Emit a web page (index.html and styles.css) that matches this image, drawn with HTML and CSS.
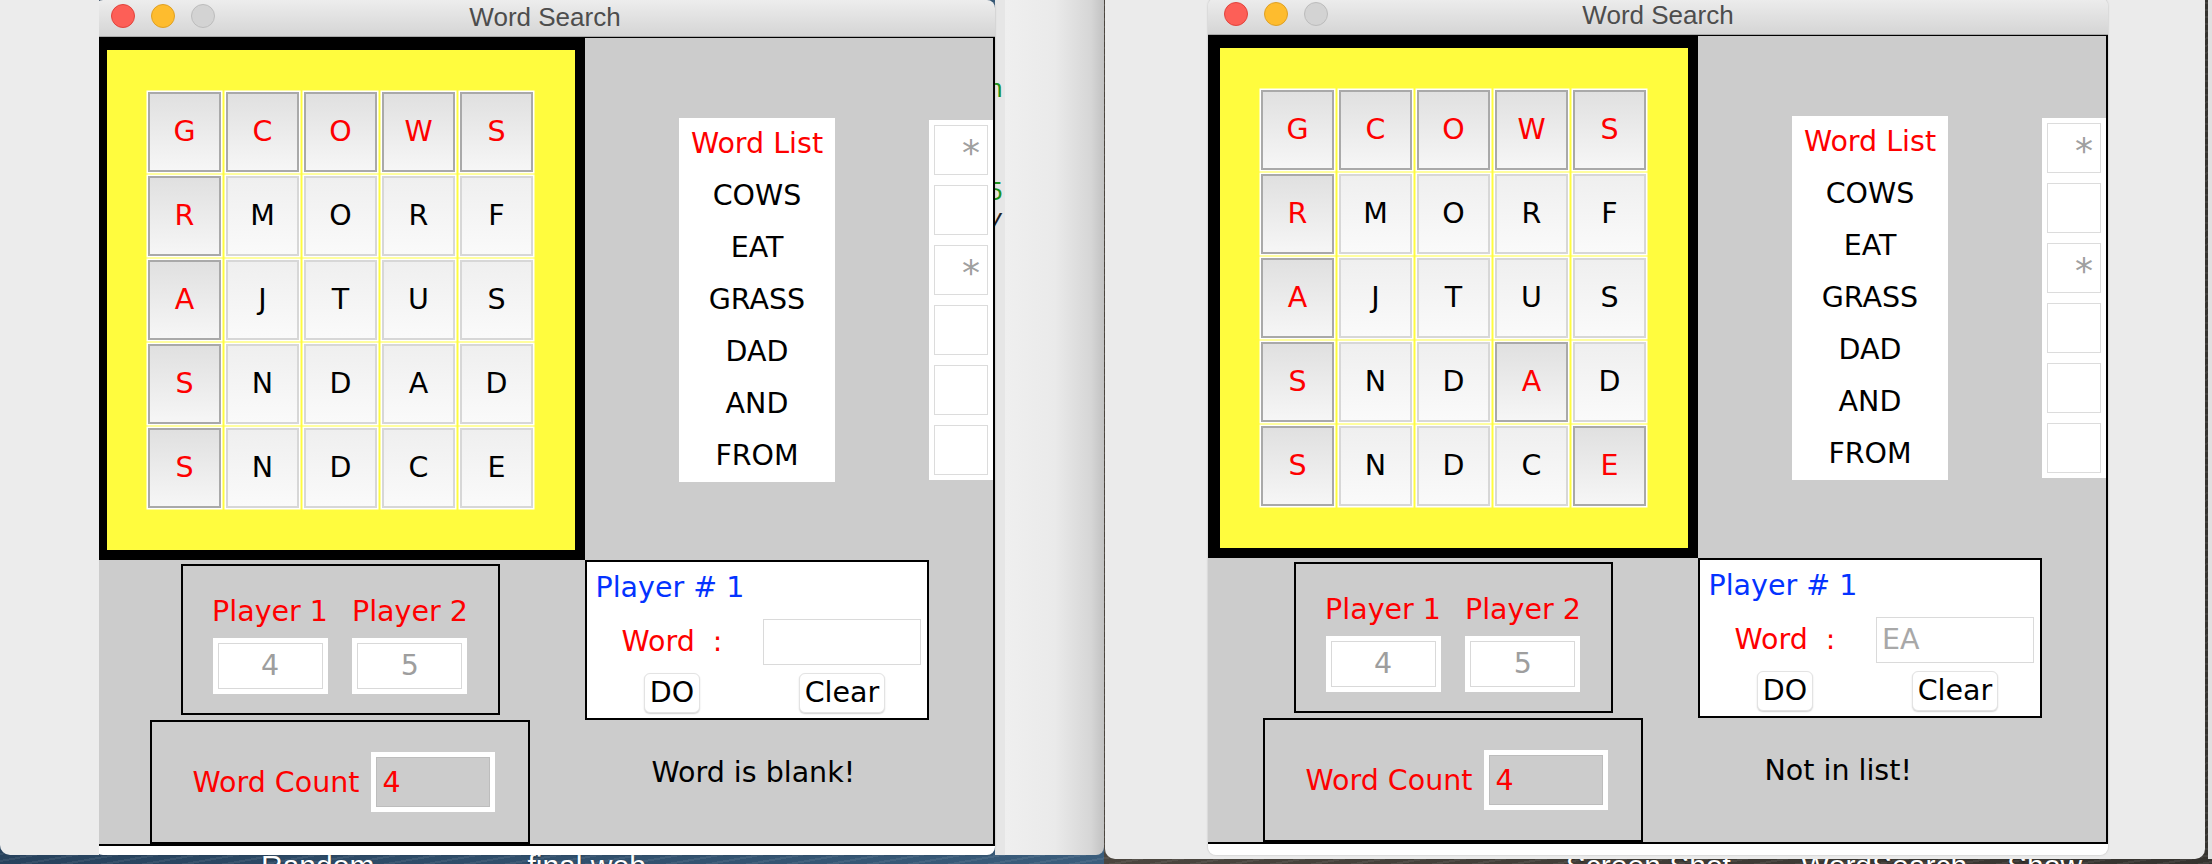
FILE: index.html
```html
<!DOCTYPE html>
<html lang="en">
<head>
<meta charset="utf-8">
<title>Word Search</title>
<link rel="stylesheet" href="styles.css">
</head>
<body>
<div class="desktop">
  <div class="desk-labels">
    <span class="desk-label lbl-random">Random</span>
    <span class="desk-label lbl-final">final web</span>
    <span class="desk-label lbl-shot">Screen Shot</span>
    <span class="desk-label lbl-ws">WordSearch</span>
    <span class="desk-label lbl-more">Show</span>
  </div>

  <div class="bg bg-ide">
    <div class="ide-text">
      <div class="ide-line l1">n</div>
      <div class="ide-line l2">5</div>
      <div class="ide-line l3">v</div>
    </div>
  </div>
  <div class="bg bg-back"></div>
  <div class="bg bg-edge"></div>

  <!-- Left window -->
  <section class="win win-a">
    <header class="titlebar">
      <div class="lights"><i class="light red"></i><i class="light yellow"></i><i class="light gray"></i></div>
      <div class="title">Word Search</div>
      <div></div>
    </header>
    <div class="content">
      <div class="board">
        <div class="tiles">
          <div class="tile sel hit">G</div><div class="tile sel hit">C</div><div class="tile sel hit">O</div><div class="tile sel hit">W</div><div class="tile sel hit">S</div>
          <div class="tile sel hit">R</div><div class="tile">M</div><div class="tile">O</div><div class="tile">R</div><div class="tile">F</div>
          <div class="tile sel hit">A</div><div class="tile">J</div><div class="tile">T</div><div class="tile">U</div><div class="tile">S</div>
          <div class="tile sel hit">S</div><div class="tile">N</div><div class="tile">D</div><div class="tile">A</div><div class="tile">D</div>
          <div class="tile sel hit">S</div><div class="tile">N</div><div class="tile">D</div><div class="tile">C</div><div class="tile">E</div>
        </div>
      </div>
      <div class="lists">
        <div class="wordlist">
          <div class="wl-row wl-head">Word List</div>
          <div class="wl-row">COWS</div>
          <div class="wl-row">EAT</div>
          <div class="wl-row">GRASS</div>
          <div class="wl-row">DAD</div>
          <div class="wl-row">AND</div>
          <div class="wl-row">FROM</div>
        </div>
        <div class="marks">
          <div class="mark">*</div>
          <div class="mark"></div>
          <div class="mark">*</div>
          <div class="mark"></div>
          <div class="mark"></div>
          <div class="mark"></div>
        </div>
      </div>
      <div class="lower-left">
        <div class="scores">
          <div class="score-col">
            <div class="score-label">Player 1</div>
            <div class="score-box"><div class="score-field">4</div></div>
          </div>
          <div class="score-col">
            <div class="score-label">Player 2</div>
            <div class="score-box"><div class="score-field">5</div></div>
          </div>
        </div>
        <div class="count">
          <span class="count-label">Word Count</span>
          <div class="count-box"><div class="count-field">4</div></div>
        </div>
      </div>
      <div class="lower-right">
        <div class="turn">
          <div class="turn-title">Player # 1</div>
          <div class="turn-grid">
            <div class="turn-label">Word  :</div>
            <div class="turn-field"></div>
            <button class="btn">DO</button>
            <button class="btn">Clear</button>
          </div>
        </div>
        <div class="status">Word is blank!</div>
      </div>
    </div>
    <div class="foot"></div>
  </section>

  <!-- Right window -->
  <section class="win win-b">
    <header class="titlebar">
      <div class="lights"><i class="light red"></i><i class="light yellow"></i><i class="light gray"></i></div>
      <div class="title">Word Search</div>
      <div></div>
    </header>
    <div class="content">
      <div class="board">
        <div class="tiles">
          <div class="tile sel hit">G</div><div class="tile sel hit">C</div><div class="tile sel hit">O</div><div class="tile sel hit">W</div><div class="tile sel hit">S</div>
          <div class="tile sel hit">R</div><div class="tile">M</div><div class="tile">O</div><div class="tile">R</div><div class="tile">F</div>
          <div class="tile sel hit">A</div><div class="tile">J</div><div class="tile">T</div><div class="tile">U</div><div class="tile">S</div>
          <div class="tile sel hit">S</div><div class="tile">N</div><div class="tile">D</div><div class="tile sel hit">A</div><div class="tile">D</div>
          <div class="tile sel hit">S</div><div class="tile">N</div><div class="tile">D</div><div class="tile">C</div><div class="tile sel hit">E</div>
        </div>
      </div>
      <div class="lists">
        <div class="wordlist">
          <div class="wl-row wl-head">Word List</div>
          <div class="wl-row">COWS</div>
          <div class="wl-row">EAT</div>
          <div class="wl-row">GRASS</div>
          <div class="wl-row">DAD</div>
          <div class="wl-row">AND</div>
          <div class="wl-row">FROM</div>
        </div>
        <div class="marks">
          <div class="mark">*</div>
          <div class="mark"></div>
          <div class="mark">*</div>
          <div class="mark"></div>
          <div class="mark"></div>
          <div class="mark"></div>
        </div>
      </div>
      <div class="lower-left">
        <div class="scores">
          <div class="score-col">
            <div class="score-label">Player 1</div>
            <div class="score-box"><div class="score-field">4</div></div>
          </div>
          <div class="score-col">
            <div class="score-label">Player 2</div>
            <div class="score-box"><div class="score-field">5</div></div>
          </div>
        </div>
        <div class="count">
          <span class="count-label">Word Count</span>
          <div class="count-box"><div class="count-field">4</div></div>
        </div>
      </div>
      <div class="lower-right">
        <div class="turn">
          <div class="turn-title">Player # 1</div>
          <div class="turn-grid">
            <div class="turn-label">Word  :</div>
            <div class="turn-field">EA</div>
            <button class="btn">DO</button>
            <button class="btn">Clear</button>
          </div>
        </div>
        <div class="status">Not in list!</div>
      </div>
    </div>
    <div class="foot"></div>
  </section>

  <div class="bg bg-cover"></div>
</div>
</body>
</html>
```

FILE: styles.css
```css
* { box-sizing: border-box; }
html, body { margin: 0; padding: 0; }
body {
  width: 2212px;
  height: 864px;
  overflow: hidden;
  font-family: "DejaVu Sans", "Liberation Sans", sans-serif;
  font-size: 28.5px;
}

.desktop {
  position: relative;
  width: 2212px;
  height: 864px;
  overflow: hidden;
  background:
    repeating-linear-gradient(170deg, rgba(255,255,255,0.07) 0 2px, rgba(0,0,0,0) 2px 7px),
    linear-gradient(to right, #27425d 0, #3a5d7c 1104px, #4b463f 1104px, #35332f 2212px);
}

/* desktop icon labels, only their tops peek out */
.desk-labels {
  position: absolute;
  left: 0;
  top: 855px;
  width: 2212px;
  height: 9px;
  overflow: hidden;
  display: flex;
}
.desk-label {
  flex: none;
  margin-top: -4px;
  font-family: "Liberation Sans", Arial, sans-serif;
  font-size: 30px;
  line-height: 30px;
  color: #ffffff;
  text-shadow: 0 1px 2px rgba(0,0,0,0.6);
  white-space: nowrap;
}
.lbl-random { margin-left: 261px; }
.lbl-final { margin-left: 153px; }
.lbl-shot { margin-left: 920px; }
.lbl-ws { margin-left: 70px; }
.lbl-more { margin-left: 40px; }

/* background windows */
.bg { position: absolute; top: 0; }
.bg-cover {
  left: 0;
  width: 99px;
  height: 855px;
  background: #ececec;
  border-bottom-left-radius: 10px;
}
.bg-ide {
  left: 995px;
  width: 109px;
  height: 855px;
  background: linear-gradient(to right, #e6e6e6 0, #e6e6e6 10px, #efefef 10px, #eaeaea 55%, #d6d6d6 88%, #c2c2c2 100%);
  border-bottom-right-radius: 8px;
}
.ide-text {
  margin-left: -7px;
  padding-top: 71px;
  font-family: "Liberation Sans", Arial, sans-serif;
  font-size: 26px;
  color: #1c921c;
}
.ide-line { height: 34px; line-height: 34px; }
.l2 { margin-top: 71px; height: 30px; line-height: 30px; }
.l3 { margin-top: 2px; height: 20px; line-height: 20px; color: #222; font-style: italic; }
.bg-back {
  left: 1105px;
  width: 1100px;
  height: 859px;
  background: #ebebeb;
  border-radius: 0 0 10px 10px;
}
.bg-edge {
  left: 2208px;
  width: 4px;
  height: 859px;
  background: #e0e0e0;
}

/* Word Search windows */
.win {
  position: absolute;
  width: 900px;
  display: flex;
  flex-direction: column;
  border-radius: 8px;
  overflow: hidden;
  box-shadow: 0 0 2px rgba(0,0,0,0.25);
}
.win-a { left: 95px; top: 0; height: 855px; }
.win-b { left: 1208px; top: -2px; height: 857px; }

.titlebar {
  flex: none;
  height: 37px;
  display: grid;
  grid-template-columns: 1fr auto 1fr;
  align-items: start;
  background: linear-gradient(#ededed, #d5d5d5);
  border-bottom: 1px solid #a9a9a9;
}
.lights {
  display: flex;
  gap: 16px;
  padding: 4px 0 0 16px;
}
.light {
  display: block;
  width: 24px;
  height: 24px;
  border-radius: 50%;
}
.red { background: #fd5f57; border: 1px solid #e0443d; }
.yellow { background: #febc2e; border: 1px solid #dea025; }
.gray { background: #d3d3d3; border: 1px solid #bcbcbc; }
.title {
  margin-top: 2px;
  font-family: "Liberation Sans", Arial, sans-serif;
  font-size: 26px;
  line-height: 30px;
  color: #4d4d4d;
}

.content {
  flex: none;
  height: 809px;
  background: #cccccc;
  border-top: 1px solid #000;
  border-right: 2px solid #000;
  border-bottom: 2px solid #000;
  display: grid;
  grid-template-columns: 490px 408px;
  grid-template-rows: 522px 284px;
  overflow: hidden;
}
.foot {
  flex: 1;
  background: #ffffff;
}

/* letter board */
.board {
  border-style: solid;
  border-color: #000;
  border-width: 12px 10px 10px 12px;
  background: #fffc3e;
  padding: 42px 0 0 41px;
}
.tiles {
  display: grid;
  grid-template-columns: repeat(5, 73px);
  grid-template-rows: repeat(5, 80px);
  gap: 4px 5px;
}
.tile {
  border: 2px solid #d7d7d7;
  box-shadow: 0 0 0 1.5px #ffffff;
  background: linear-gradient(#efefef, #fafafa);
  display: flex;
  align-items: center;
  justify-content: center;
  color: #000;
  line-height: 1;
}
.tile.sel {
  border-color: #a9a9a9;
  background: linear-gradient(#e0e0e0, #f6f6f6);
}
.tile.hit { color: #fe0000; }

/* word list + marks */
.lists {
  display: flex;
  align-items: flex-start;
  padding: 80px 0 0 94px;
}
.wordlist {
  flex: none;
  width: 156px;
  background: #ffffff;
}
.wl-row {
  height: 52px;
  line-height: 52px;
  text-align: center;
  color: #000;
  white-space: nowrap;
}
.wl-head { color: #fe0000; }
.marks {
  flex: none;
  width: 72px;
  margin: 2px 0 0 94px;
  padding: 5px;
  background: #ffffff;
  display: flex;
  flex-direction: column;
  gap: 10px;
}
.mark {
  width: 54px;
  height: 50px;
  border: 1px solid #dcdcdc;
  text-align: right;
  padding: 9px 7px 0 0;
  font-size: 36px;
  line-height: 36px;
  color: #a0a0a0;
  overflow: hidden;
}

/* lower left: scores and count */
.lower-left {
  display: flex;
  flex-direction: column;
  align-items: center;
  padding-top: 4px;
  gap: 5px;
}
.scores {
  width: 319px;
  height: 151px;
  border: 2px solid #000;
  display: flex;
  justify-content: center;
  gap: 24px;
  padding-top: 28.5px;
}
.score-col {
  display: flex;
  flex-direction: column;
  align-items: center;
}
.score-label {
  color: #fe0000;
  line-height: 34px;
  white-space: nowrap;
}
.score-box {
  margin-top: 9px;
  width: 115px;
  height: 56px;
  background: #ffffff;
  padding: 5px;
}
.score-field {
  height: 100%;
  border: 1px solid #d9d9d9;
  display: flex;
  align-items: center;
  justify-content: center;
  color: #9e9e9e;
}
.count {
  width: 380px;
  height: 124px;
  border: 2px solid #000;
  display: flex;
  align-items: center;
  padding-left: 40.5px;
  gap: 12px;
}
.count-label {
  color: #fe0000;
  white-space: nowrap;
}
.count-box {
  flex: none;
  width: 124px;
  height: 60px;
  background: #ffffff;
  padding: 5px;
}
.count-field {
  height: 100%;
  background: #cccccc;
  border: 1px solid #bdbdbd;
  display: flex;
  align-items: center;
  padding-left: 5px;
  color: #fe0000;
}

/* lower right: turn panel + status */
.lower-right {
  display: flex;
  flex-direction: column;
  align-items: flex-start;
}
.turn {
  width: 344px;
  height: 160px;
  border: 2px solid #000;
  background: #ffffff;
  padding-top: 8.5px;
}
.turn-title {
  padding-left: 8.5px;
  line-height: 34px;
  color: #0433ff;
}
.turn-grid {
  margin-top: 14.5px;
  display: grid;
  grid-template-columns: 170px 170px;
  grid-template-rows: 46px 40px;
  row-gap: 8px;
  justify-items: center;
  align-items: center;
}
.turn-label {
  color: #fe0000;
  white-space: pre;
  line-height: 34px;
}
.turn-field {
  width: 158px;
  height: 46px;
  border: 1px solid #dadada;
  padding-left: 5px;
  line-height: 44px;
  color: #a8a8a8;
  justify-self: center;
}
.btn {
  height: 40px;
  padding: 0 5px;
  margin: 0;
  font-family: "DejaVu Sans", sans-serif;
  font-size: 28.5px;
  line-height: 38px;
  color: #000;
  background: #ffffff;
  border: 1px solid #e3e3e3;
  border-radius: 6px;
  box-shadow: 0 1px 1.5px rgba(0,0,0,0.18);
}
.status {
  margin-top: 35.5px;
  padding-left: 66.5px;
  line-height: 34px;
  color: #000;
  white-space: nowrap;
}
```
